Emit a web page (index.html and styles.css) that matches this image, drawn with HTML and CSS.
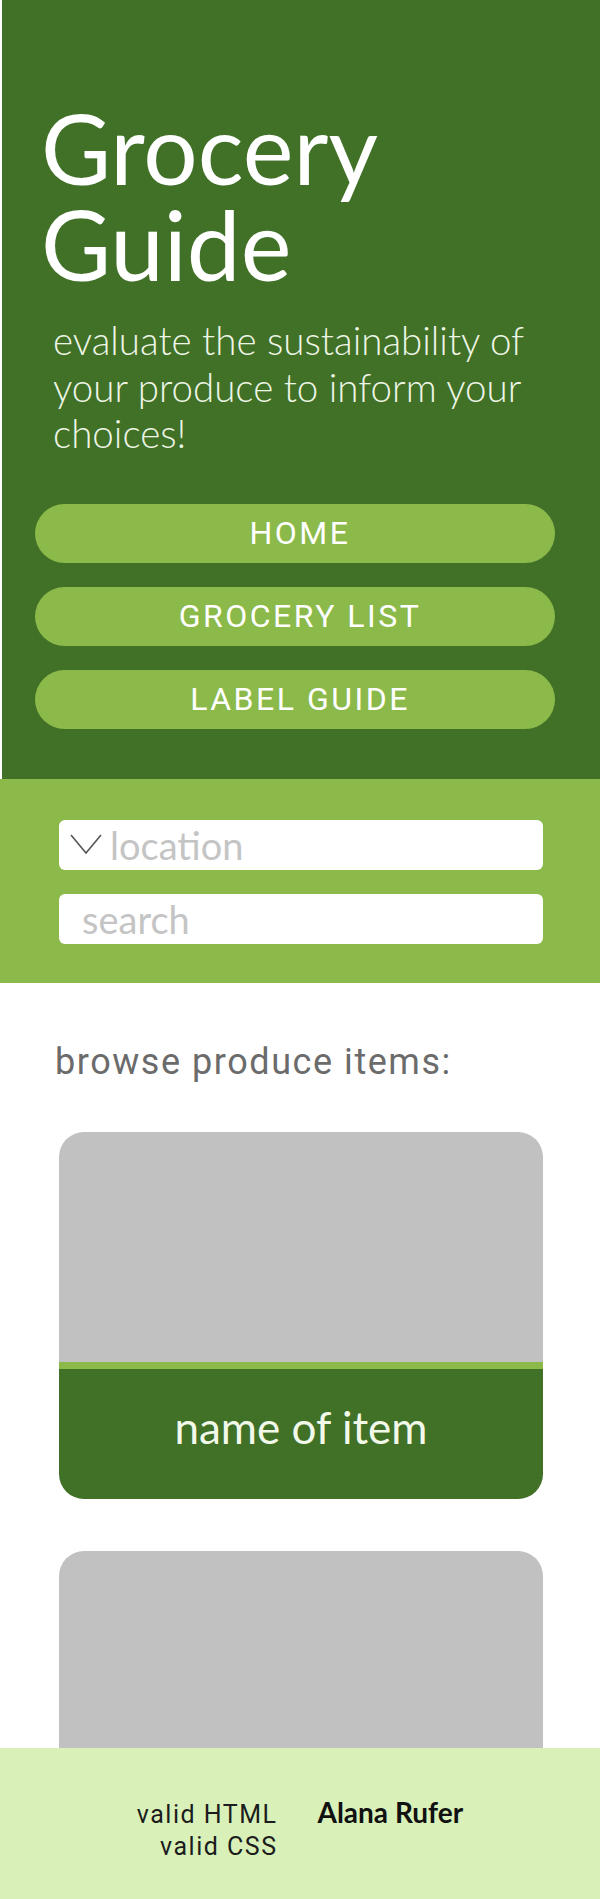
FILE: index.html
```html
<!DOCTYPE html>
<html lang="en">
<head>
<meta charset="utf-8">
<title>Grocery Guide</title>
<link rel="stylesheet" href="styles.css">
</head>
<body>
<div class="page">
  <header class="hero">
    <h1 class="title">Grocery<br>Guide</h1>
    <p class="tagline">evaluate the sustainability of your produce to inform your choices!</p>
    <nav class="nav">
      <a class="nav-btn" href="#">HOME</a>
      <a class="nav-btn" href="#">GROCERY LIST</a>
      <a class="nav-btn" href="#">LABEL GUIDE</a>
    </nav>
  </header>
  <section class="filters">
    <div class="field field-location">
      <svg class="chevron" width="32" height="20" viewBox="0 0 32 20"><polyline points="1,1 16,19 31,1" fill="none" stroke="#555" stroke-width="1.6"/></svg>
      <span>location</span>
    </div>
    <div class="field field-search"><span>search</span></div>
  </section>
  <main class="content">
    <h2 class="browse">browse produce items:</h2>
    <div class="cards">
      <article class="card">
        <div class="card-img"></div>
        <div class="card-name">name of item</div>
      </article>
      <article class="card">
        <div class="card-img"></div>
      </article>
    </div>
  </main>
  <footer class="footer">
    <div class="valid">
      <div>valid HTML</div>
      <div>valid CSS</div>
    </div>
    <div class="author">Alana Rufer</div>
  </footer>
</div>
</body>
</html>
```
FILE: styles.css
```css
* { box-sizing: border-box; }
html, body { margin: 0; padding: 0; background: #fff; }
.page {
  height: 100vh;
  display: flex;
  flex-direction: column;
  overflow: hidden;
}
.hero {
  flex: none;
  background: #417027;
  margin-left: 2px;
  padding: 100px 0 50px;
}
.title {
  margin: 0;
  padding-left: 39px;
  font-family: Lato, "Liberation Sans", sans-serif;
  font-weight: 400;
  font-size: 96px;
  line-height: 96px;
  color: #fff;
}
.tagline {
  margin: 25px 0 0;
  padding: 0 50px 0 51px;
  font-family: Lato, "Liberation Sans", sans-serif;
  font-weight: 300;
  font-size: 38.5px;
  line-height: 46.5px;
  color: #eef6e6;
}
.nav {
  margin-top: 47px;
  padding: 0 45px 0 33px;
  display: flex;
  flex-direction: column;
  gap: 24px;
}
.nav-btn {
  height: 59px;
  border-radius: 30px;
  background: #8bb94a;
  display: flex;
  align-items: center;
  justify-content: center;
  padding-left: 10px;
  font-family: Roboto, "Liberation Sans", sans-serif;
  font-size: 32px;
  letter-spacing: 2.5px;
  color: #fff;
  text-decoration: none;
}
.filters {
  flex: none;
  background: #8bb94a;
  padding: 41px 57px 39px 59px;
  display: flex;
  flex-direction: column;
  gap: 24px;
}
.field {
  height: 50px;
  background: #fff;
  border-radius: 6px;
  display: flex;
  align-items: center;
  font-family: Lato, "Liberation Sans", sans-serif;
  font-size: 38px;
  color: #c4c4c4;
}
.field-location { padding-left: 11px; gap: 8px; }
.field-location .chevron { flex: none; margin-top: -2px; }
.field-search { padding-left: 23px; }
.content {
  flex: 1;
  min-height: 0;
  overflow: hidden;
  padding-top: 59px;
}
.browse {
  margin: 0;
  padding-left: 55px;
  font-family: Roboto, "Liberation Sans", sans-serif;
  font-weight: 400;
  font-size: 36px;
  line-height: 40px;
  letter-spacing: 1.55px;
  color: #6b6b6b;
}
.cards {
  margin-top: 50px;
  padding: 0 57px 0 59px;
  display: flex;
  flex-direction: column;
  gap: 52px;
}
.card {
  border-radius: 25px;
  overflow: hidden;
}
.card-img {
  height: 230px;
  background: #c1c1c1;
}
.cards .card:last-child .card-img { height: 367px; }
.card-name {
  height: 137px;
  border-top: 7px solid #8bb94a;
  padding-bottom: 14px;
  background: #417027;
  display: flex;
  align-items: center;
  justify-content: center;
  font-family: Lato, "Liberation Sans", sans-serif;
  font-size: 44px;
  color: #f2f9ea;
}
.footer {
  flex: none;
  height: 151px;
  background: #d9f1b9;
  padding-top: 48px;
  display: flex;
  justify-content: center;
  align-items: baseline;
  gap: 40px;
}
.valid {
  text-align: right;
  font-family: Roboto, "Liberation Sans", sans-serif;
  font-size: 25px;
  line-height: 32px;
  letter-spacing: 1.5px;
  color: #1c1c1c;
}
.author {
  font-family: Lato, "Liberation Sans", sans-serif;
  font-weight: 700;
  font-size: 28px;
  line-height: 32px;
  color: #111;
}
```
